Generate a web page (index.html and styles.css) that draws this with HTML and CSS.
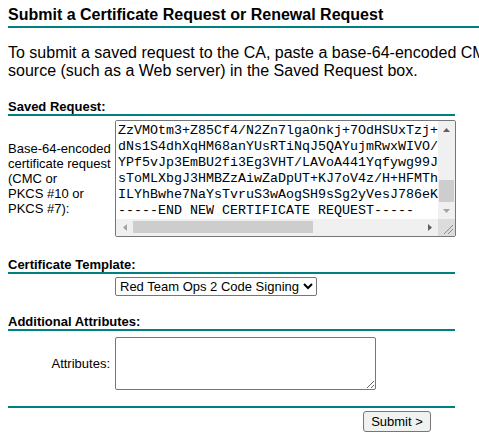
FILE: index.html
```html
<!DOCTYPE html>
<html lang="en">
<head>
<meta charset="utf-8">
<title>Microsoft Active Directory Certificate Services</title>
<link rel="stylesheet" href="styles.css">
</head>
<body>
<h1 class="title">Submit a Certificate Request or Renewal Request</h1>
<div class="rule rule-title"></div>
<p class="info">To submit a saved request to the CA, paste a base-64-encoded CMC or PKCS #10 certificate request or PKCS #7 renewal request generated by an external source (such as a Web server) in the Saved Request box.</p>
<form class="form" action="#" method="post">
  <div class="section-head head-saved">Saved Request:</div>
  <div class="rule"></div>
  <div class="row row-saved">
    <label class="lbl" for="CertRequest">Base-64-encoded<br>certificate request<br>(CMC or<br>PKCS #10 or<br>PKCS #7):</label>
    <div class="ta-box">
      <textarea class="req" id="CertRequest" name="CertRequest" wrap="off" spellcheck="false">
-----BEGIN NEW CERTIFICATE REQUEST-----
MIIFCTCCA/ECAQAwADCCASIwDQYJKoZIhvcNAQEBBQADggEPADCCAQoCggEBAMq3
w9fT2kLh0dPqR8m1nZ4bXyVtE6sQ7uJcA5oWgH3iKlN0pRzYvBxD2eF4aS9UjO1M
kT7bV3nC8xQ2rY5hW0gE4jL6pA1sZ9dF3uN7oI2vKmB8cX5tRyHqGwJe0lD4zSfP
Jq2mX8vLcR5tN1wYbH7kE3pGsU9oD4fZaQ6iT0yCeW2jM8nVgK5xB1rLhO3uS7dA
oUCAwEAAaCCAsgwGgYKKwYBBAGCNw0CAzEMFgoxMC4wLjE3NzYzLjIwSQYJKwYBB
AYI3FRQxPDA6AgEFDBhEQy0wMS5jb3JwLmxvY2FsDAxDT1JQXGFkbWluDAtjZXJy
ZXEuZXhlMHIGCisGAQQBgjcNAgIxZDBiAgEBHloATQBpAGMAcgBvAHMAbwBmAHQA
IABTAG8AZgB0AHcAYQByAGUAIABLAGUAeQAgAFMAdABvAHIAYQBnAGUAIABQAHIA
bwB2AGkAZABlAHIDAQAwggEbBgkqhkiG9w0BCQ4xggEMMIIBCDA+BgkrBgEEAYI3
FQcEMTAvBicrBgEEAYI3FQiH7cZmhP2SJIG5jRCE5pUbhcOtWoE8AgFkAgECMBMG
A1UdJQQMMAoGCCsGAQUFBwMDMA4GA1UdDwEB/wQEAwIHgDAbBgkrBgEEAYI3FQoE
ZzVMOtm3+Z85Cf4/N2Zn7lgaOnkj+7OdHSUxTzj+Qm4wLp2RvY8sKd1FtX6hE0cA
dNs1S4dhXqHM68anYUsRTiNqJ5QAYujmRwxWIVO/bG3kPz7TeA9rVn2MuL5sWc0D
YPf5vJp3EmBU2fi3Eg3VHT/LAVoA441Yqfywg99JkH2nR7xTpC4mW8zBoE1sG6dQ
sToMLXbgJ3HMBZzAiwZaDpUT+KJ7oV4z/H+HFMThaN5vQ2yLcR8jU3tXmF0wK9eI
ILYhBwhe7NaYsTvruS3wAogSH9sSg2yVesJ786eKtP4bZ1nqWd==
-----END NEW CERTIFICATE REQUEST-----</textarea>
      <div class="vbar">
        <div class="sb-btn"><svg width="7" height="4" viewBox="0 0 7 4"><polygon points="3.5,0 7,4 0,4" fill="#606060"/></svg></div>
        <div class="vtrack"><div class="vthumb"></div></div>
        <div class="sb-btn"><svg width="7" height="4" viewBox="0 0 7 4"><polygon points="0,0 7,0 3.5,4" fill="#a3a3a3"/></svg></div>
      </div>
      <div class="hbar">
        <div class="sb-btn"><svg width="4" height="7" viewBox="0 0 4 7"><polygon points="4,0 4,7 0,3.5" fill="#a3a3a3"/></svg></div>
        <div class="htrack"><div class="hthumb"></div></div>
        <div class="sb-btn"><svg width="4" height="7" viewBox="0 0 4 7"><polygon points="0,0 4,3.5 0,7" fill="#606060"/></svg></div>
      </div>
      <div class="corner"><svg width="17" height="17" viewBox="0 0 17 17"><line x1="15" y1="6" x2="6" y2="15" stroke="#8a8a8a" stroke-width="1"/><line x1="15" y1="10" x2="10" y2="15" stroke="#8a8a8a" stroke-width="1"/></svg></div>
    </div>
  </div>
  <div class="section-head head-template">Certificate Template:</div>
  <div class="rule"></div>
  <div class="row row-template">
    <span class="spacer"></span>
    <select class="tpl" name="CertTemplate">
      <option selected>Red Team Ops 2 Code Signing</option>
      <option>User</option>
      <option>Basic EFS</option>
    </select>
  </div>
  <div class="section-head head-attrs">Additional Attributes:</div>
  <div class="rule"></div>
  <div class="row row-attrs">
    <label class="lbl lbl-right" for="CertAttrib">Attributes:</label>
    <textarea class="attrs" id="CertAttrib" name="CertAttrib" wrap="off" spellcheck="false"></textarea>
  </div>
  <div class="rule rule-bottom"></div>
  <div class="actions">
    <button class="submit" type="button">Submit &gt;</button>
  </div>
</form>
<script src="script.js"></script>
</body>
</html>
```

FILE: styles.css
```css
html {
  overflow: hidden;
  background: #ffffff;
}

body {
  margin: 0;
  padding: 0 8px;
  width: 1130px;
  font-family: "Liberation Sans", Arial, sans-serif;
  color: #000000;
}

.title {
  margin: 0;
  padding-top: 6px;
  font-size: 16px;
  line-height: 18px;
  font-weight: bold;
}

.rule {
  height: 2px;
  background: #008080;
}

.rule-title {
  margin-top: 2px;
}

.info {
  margin: 16px 0 0;
  font-size: 16px;
  line-height: 18px;
}

.form {
  width: 447px;
  margin: 0;
}

.section-head {
  font-size: 13px;
  line-height: 15px;
  font-weight: bold;
}

.head-saved {
  margin-top: 19px;
}

.head-template {
  margin-top: 20px;
}

.head-attrs {
  margin-top: 18px;
}

.row {
  display: grid;
  grid-template-columns: 103px auto;
  column-gap: 4px;
  align-items: center;
  justify-items: start;
}

.row-saved {
  margin-top: 4px;
}

.row-template {
  margin-top: 3px;
}

.row-attrs {
  margin-top: 6px;
}

.lbl {
  font-size: 13px;
  line-height: 15px;
}

.lbl-right {
  justify-self: end;
  text-align: right;
  margin-right: 1px;
}

/* Saved request box with classic scrollbars */
.ta-box {
  box-sizing: border-box;
  width: 341px;
  height: 117px;
  display: grid;
  grid-template-columns: 322px 17px;
  grid-template-rows: 98px 17px;
  border: 1px solid #767676;
  border-radius: 2px;
  background: #ffffff;
  overflow: hidden;
}

.req {
  box-sizing: border-box;
  width: 322px;
  height: 98px;
  margin: 0;
  padding: 2px 2px 0;
  border: 0;
  outline: none;
  resize: none;
  overflow: hidden;
  font-family: "Liberation Mono", "Courier New", monospace;
  font-size: 13.33px;
  line-height: 16px;
  color: #000000;
  background: #ffffff;
}

.vbar {
  display: flex;
  flex-direction: column;
  background: #f0f0f0;
}

.hbar {
  display: flex;
  background: #f0f0f0;
}

.sb-btn {
  flex: none;
  width: 17px;
  height: 17px;
  display: flex;
  align-items: center;
  justify-content: center;
}

.sb-btn svg {
  display: block;
}

.vtrack {
  flex: 1;
  display: flex;
  flex-direction: column;
  justify-content: flex-end;
}

.vthumb {
  height: 22px;
  margin: 0 1px 0 1px;
  background: #cdcdcd;
}

.htrack {
  flex: 1;
  display: flex;
  align-items: stretch;
}

.hthumb {
  width: 180px;
  margin: 2px 0 3px;
  background: #cdcdcd;
}

.corner {
  background: #dcdcdc;
}

.corner svg {
  display: block;
}

.attrs {
  box-sizing: border-box;
  width: 261px;
  height: 53px;
  margin: 0;
  padding: 2px;
  border: 1px solid #767676;
  border-radius: 2px;
  font-family: "Liberation Mono", "Courier New", monospace;
  font-size: 13.33px;
  line-height: 16px;
  color: #000000;
  background: #ffffff;
}

.tpl {
  box-sizing: border-box;
  width: 202px;
  height: 19px;
  margin: 0;
  font-family: "Liberation Sans", Arial, sans-serif;
  font-size: 13px;
  color: #000000;
  background: #ffffff;
  border: 1px solid #767676;
  border-radius: 2px;
}

.rule-bottom {
  margin-top: 16px;
}

.actions {
  display: flex;
  justify-content: flex-end;
  padding-right: 24px;
  margin-top: 3px;
}

.submit {
  box-sizing: border-box;
  width: 68px;
  height: 21px;
  margin: 0;
  padding: 1px 6px;
  font-family: "Liberation Sans", Arial, sans-serif;
  font-size: 13px;
  color: #000000;
  background: #eff2ef;
  border: 1px solid #767676;
  border-radius: 3px;
}
```

FILE: script.js
```js
document.querySelectorAll('.req').forEach(function (t) {
  t.scrollTop = t.scrollHeight;
  t.scrollLeft = 0;
});
```
